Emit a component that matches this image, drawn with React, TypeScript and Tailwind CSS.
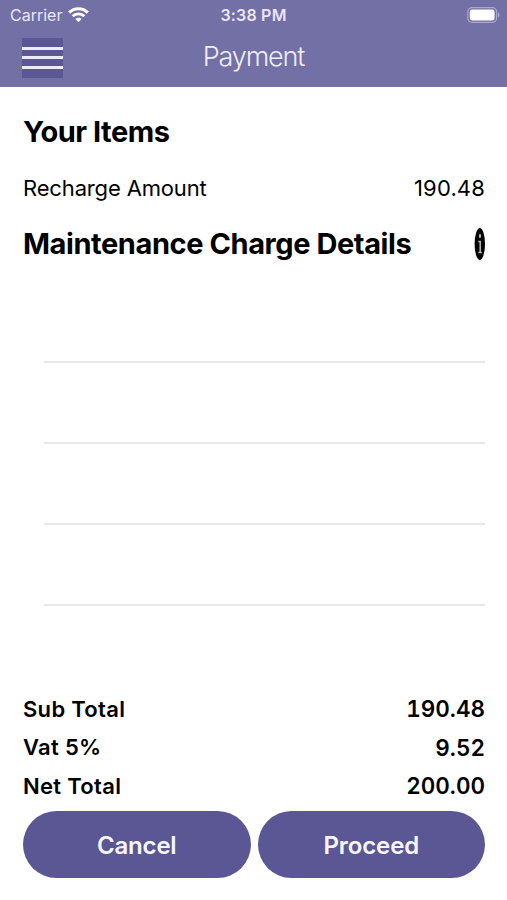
interface RowProps {
  label: string;
  value: string;
}

const totals: RowProps[] = [
  { label: "Sub Total", value: "190.48" },
  { label: "Vat 5%", value: "9.52" },
  { label: "Net Total", value: "200.00" },
];

function StatusBar() {
  return (
    <div className="h-[30px] grid grid-cols-3 items-center pl-[10px] pr-[7px] text-[#e9e7f8]">
      <div className="flex items-center gap-[6px]">
        <span className="text-[16px] leading-none">Carrier</span>
        <svg width="21" height="16" viewBox="0 0 21 16" fill="none" stroke="#fff">
          <path d="M1.2 5.6C6.3.5 14.7.5 19.8 5.6" strokeWidth="2.9" />
          <path d="M4.6 9.2C7.8 6 13.2 6 16.4 9.2" strokeWidth="2.8" />
          <path
            d="M10.5 15.2 7.4 12.1C9.1 10.2 11.9 10.2 13.6 12.1Z"
            fill="#fff"
            stroke="none"
          />
        </svg>
      </div>
      <span className="text-center text-[16px] leading-none font-semibold tracking-[0.2px] pr-[3px]">
        3:38 PM
      </span>
      <svg className="justify-self-end" width="33" height="16" viewBox="0 0 33 16">
        <rect x="0.8" y="0.6" width="28.8" height="14.8" rx="4.2" fill="none" stroke="#aaa8cf" strokeWidth="1.2" />
        <rect x="2.8" y="2.6" width="24.8" height="10.8" rx="2.4" fill="#fff" />
        <path d="M31 5.6c2 .7 2 4.1 0 4.8z" fill="#aaa8cf" />
      </svg>
    </div>
  );
}

function NavBar() {
  return (
    <div className="h-[57px] grid grid-cols-[1fr_auto_1fr] items-center px-[22px] pb-[2px]">
      <button className="w-[41px] h-[40px] bg-[#5b5794] flex flex-col justify-center gap-[6.5px]">
        <span className="h-[3px] w-full bg-[#eceafa]" />
        <span className="h-[3px] w-full bg-[#eceafa]" />
        <span className="h-[3px] w-full bg-[#eceafa]" />
      </button>
      <h1 className="-mt-[2px] text-[27px] leading-none font-light tracking-[-1.15px] text-[#efedfb]">
        Payment
      </h1>
    </div>
  );
}

function InfoIcon() {
  return (
    <svg width="11" height="33" viewBox="0 0 11 33">
      <ellipse cx="5.8" cy="16" rx="5.2" ry="16" fill="#000" />
      <ellipse cx="6" cy="8" rx="1.1" ry="2" fill="#bbb" />
      <path d="M4.2 13.4h2v10.8M4.4 24.4h3.4" fill="none" stroke="#bbb" strokeWidth="1.5" />
    </svg>
  );
}

function TotalRow({ label, value }: RowProps) {
  return (
    <div className="h-[38.5px] flex items-center justify-between text-[22px] font-semibold">
      <span className="tracking-[0.3px]">{label}</span>
      <span className="text-[22.5px] tabular-nums">{value}</span>
    </div>
  );
}

export default function App() {
  return (
    <div className="w-[507px] h-[900px] flex flex-col bg-white text-black overflow-hidden font-['Inter','Liberation_Sans',sans-serif]">
      <header className="h-[87px] bg-[#7370a6]">
        <StatusBar />
        <NavBar />
      </header>

      <main className="flex-1 flex flex-col pt-[17px] pl-[23px] pr-[22px]">
        <h2 className="h-14 flex items-center text-[29px] font-bold tracking-[-0.5px]">
          Your Items
        </h2>
        <div className="h-14 flex items-center justify-between text-[22px]">
          <span className="tracking-[-0.15px]">Recharge Amount</span>
          <span className="tracking-[0.15px]">190.48</span>
        </div>
        <div className="h-14 flex items-center justify-between">
          <h2 className="text-[29px] font-bold tracking-[-0.42px]">
            Maintenance Charge Details
          </h2>
          <InfoIcon />
        </div>

        <ul className="h-[418px] pt-[10px] pl-[21px]">
          <li className="h-[81px] border-b-2 border-[#e8e8e8]" />
          <li className="h-[81px] border-b-2 border-[#e8e8e8]" />
          <li className="h-[81px] border-b-2 border-[#e8e8e8]" />
          <li className="h-[81px] border-b-2 border-[#e8e8e8]" />
        </ul>

        <div>
          {totals.map((row) => (
            <TotalRow key={row.label} {...row} />
          ))}
        </div>

        <div className="mt-[5.5px] flex gap-[7px] text-[24px] font-semibold text-[#f7f6ff]">
          <button className="flex-1 h-[67px] pt-[2px] rounded-full bg-[#5b5794] tracking-[-0.2px]">
            Cancel
          </button>
          <button className="flex-1 h-[67px] pt-[2px] rounded-full bg-[#5b5794] tracking-[-0.1px]">
            Proceed
          </button>
        </div>
      </main>
    </div>
  );
}
